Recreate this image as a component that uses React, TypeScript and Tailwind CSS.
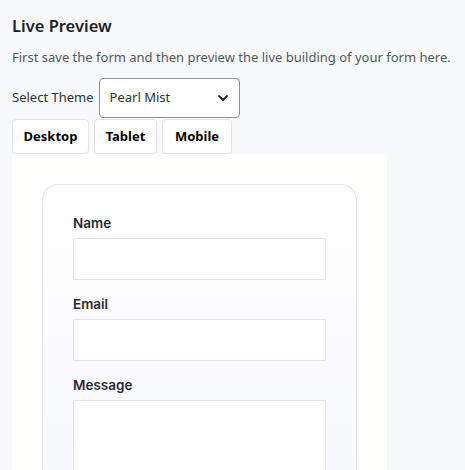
import React from "react";

export default function App() {
  return (
    <div
      className="min-h-[470px] bg-[#f8f9fb] px-3 pt-[14px] text-[#1d2327]"
      style={{ fontFamily: '"Noto Sans", "Open Sans", sans-serif' }}
    >
      <h2 className="text-[16.5px] font-semibold leading-[23px]">Live Preview</h2>
      <p className="mt-[10px] text-[13px] leading-[20px] text-[#50575e]">
        First save the form and then preview the live building of your form here.
      </p>
      <div className="mt-[11px] flex items-center gap-[5px]">
        <span className="text-[13px] text-[#2c3338]">Select Theme</span>
        <div className="flex h-[40px] w-[141px] items-center justify-between rounded-[4px] border border-[#8c8f94] bg-white pl-[10px] pr-[10px]">
          <span className="text-[13px] text-[#2c3338]">Pearl Mist</span>
          <svg width="12" height="12" viewBox="0 0 12 12" fill="none">
            <path d="M2 4l4 4 4-4" stroke="#1d2327" strokeWidth="1.8" strokeLinecap="round" strokeLinejoin="round" />
          </svg>
        </div>
      </div>
      <div className="mt-px flex gap-[5px]">
        {[
          ["Desktop", "w-[77px]"],
          ["Tablet", "w-[63px]"],
          ["Mobile", "w-[70px]"],
        ].map(([t, w]) => (
          <div
            key={t}
            className={`${w} flex h-[35px] items-center justify-center rounded-[4px] border border-[#e3e4e8] bg-white text-[13px] font-bold text-black`}
          >
            {t}
          </div>
        ))}
      </div>
      <div className="w-[375px] bg-[#fffffd] p-[30px] pb-0">
        <div
          className="rounded-t-[16px] border border-b-0 border-[#e2e4ee] bg-gradient-to-b from-white to-[#f6f7fb] px-[30px] pt-[28px] pb-[40px]"
          style={{ fontFamily: 'Inter, "Noto Sans", sans-serif' }}
        >
          {["Name", "Email"].map((l) => (
            <div key={l} className="mb-[14px]">
              <div className="mb-[5px] text-[13.5px] font-semibold leading-[20px] text-[#2a2b31]">{l}</div>
              <div className="h-[42px] border border-[#e4e5ec] bg-white" />
            </div>
          ))}
          <div>
            <div className="mb-[5px] text-[13.5px] font-semibold leading-[20px] text-[#2a2b31]">Message</div>
            <div className="h-[100px] border border-[#e4e5ec] bg-white" />
          </div>
        </div>
      </div>
    </div>
  );
}
